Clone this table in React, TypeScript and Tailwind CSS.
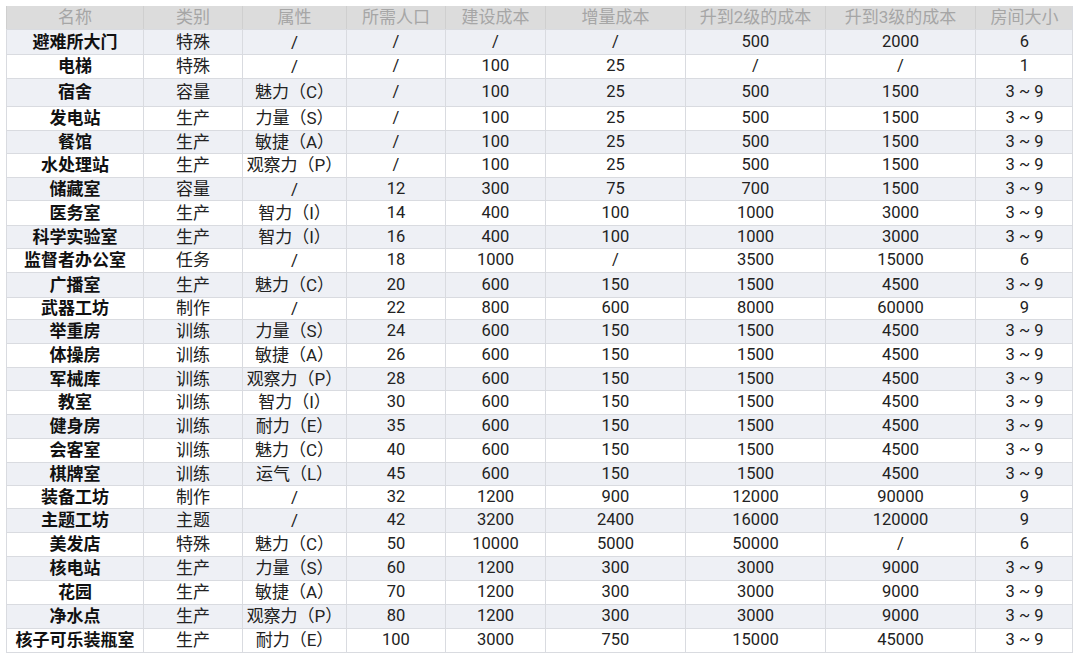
import React from "react";

const headers = [
  "名称",
  "类别",
  "属性",
  "所需人口",
  "建设成本",
  "增量成本",
  "升到2级的成本",
  "升到3级的成本",
  "房间大小",
];

// row heights measured from the source picture (宿舍 row is taller)
const rows: { h: string; c: string[] }[] = [
  { h: "h-[25px]", c: ["避难所大门", "特殊", "/", "/", "/", "/", "500", "2000", "6"] },
  { h: "h-[24px]", c: ["电梯", "特殊", "/", "/", "100", "25", "/", "/", "1"] },
  { h: "h-[28px]", c: ["宿舍", "容量", "魅力（C）", "/", "100", "25", "500", "1500", "3 ~ 9"] },
  { h: "h-[24px]", c: ["发电站", "生产", "力量（S）", "/", "100", "25", "500", "1500", "3 ~ 9"] },
  { h: "h-[23px]", c: ["餐馆", "生产", "敏捷（A）", "/", "100", "25", "500", "1500", "3 ~ 9"] },
  { h: "h-[24px]", c: ["水处理站", "生产", "观察力（P）", "/", "100", "25", "500", "1500", "3 ~ 9"] },
  { h: "h-[23px]", c: ["储藏室", "容量", "/", "12", "300", "75", "700", "1500", "3 ~ 9"] },
  { h: "h-[25px]", c: ["医务室", "生产", "智力（I）", "14", "400", "100", "1000", "3000", "3 ~ 9"] },
  { h: "h-[23px]", c: ["科学实验室", "生产", "智力（I）", "16", "400", "100", "1000", "3000", "3 ~ 9"] },
  { h: "h-[24px]", c: ["监督者办公室", "任务", "/", "18", "1000", "/", "3500", "15000", "6"] },
  { h: "h-[25px]", c: ["广播室", "生产", "魅力（C）", "20", "600", "150", "1500", "4500", "3 ~ 9"] },
  { h: "h-[22px]", c: ["武器工坊", "制作", "/", "22", "800", "600", "8000", "60000", "9"] },
  { h: "h-[24px]", c: ["举重房", "训练", "力量（S）", "24", "600", "150", "1500", "4500", "3 ~ 9"] },
  { h: "h-[24px]", c: ["体操房", "训练", "敏捷（A）", "26", "600", "150", "1500", "4500", "3 ~ 9"] },
  { h: "h-[23px]", c: ["军械库", "训练", "观察力（P）", "28", "600", "150", "1500", "4500", "3 ~ 9"] },
  { h: "h-[24px]", c: ["教室", "训练", "智力（I）", "30", "600", "150", "1500", "4500", "3 ~ 9"] },
  { h: "h-[24px]", c: ["健身房", "训练", "耐力（E）", "35", "600", "150", "1500", "4500", "3 ~ 9"] },
  { h: "h-[24px]", c: ["会客室", "训练", "魅力（C）", "40", "600", "150", "1500", "4500", "3 ~ 9"] },
  { h: "h-[23px]", c: ["棋牌室", "训练", "运气（L）", "45", "600", "150", "1500", "4500", "3 ~ 9"] },
  { h: "h-[23px]", c: ["装备工坊", "制作", "/", "32", "1200", "900", "12000", "90000", "9"] },
  { h: "h-[24px]", c: ["主题工坊", "主题", "/", "42", "3200", "2400", "16000", "120000", "9"] },
  { h: "h-[24px]", c: ["美发店", "特殊", "魅力（C）", "50", "10000", "5000", "50000", "/", "6"] },
  { h: "h-[24px]", c: ["核电站", "生产", "力量（S）", "60", "1200", "300", "3000", "9000", "3 ~ 9"] },
  { h: "h-[24px]", c: ["花园", "生产", "敏捷（A）", "70", "1200", "300", "3000", "9000", "3 ~ 9"] },
  { h: "h-[24px]", c: ["净水点", "生产", "观察力（P）", "80", "1200", "300", "3000", "9000", "3 ~ 9"] },
  { h: "h-[24px]", c: ["核子可乐装瓶室", "生产", "耐力（E）", "100", "3000", "750", "15000", "45000", "3 ~ 9"] },
];

const cols =
  "grid grid-cols-[137px_99px_104px_99px_100px_140px_140px_150px_98px]";

export default function App() {
  return (
    <div className="w-[1080px] h-[658px] bg-white pt-[6px] pl-[6px] font-['Roboto','Noto_Sans_CJK_SC',sans-serif] overflow-hidden">
      <div className="w-[1067px] border-r border-b border-[#d9dbe0]">
        <div className={`${cols} h-[23px] bg-[#dcdcdc]`}>
          {headers.map((h, i) => (
            <div
              key={i}
              className="flex items-center justify-center text-[17px] text-[#a6a6a6] border-l border-[#cfcfcf] leading-none"
            >
              {h}
            </div>
          ))}
        </div>
        {rows.map((r, ri) => (
          <div
            key={ri}
            className={`${cols} ${r.h} border-t border-[#d9dbe0] ${
              ri % 2 === 0 ? "bg-[#eef0f5]" : "bg-white"
            }`}
          >
            {r.c.map((c, ci) => (
              <div
                key={ci}
                className={`flex items-center justify-center leading-none border-l border-[#d9dbe0] ${
                  ci === 0
                    ? "text-[17px] font-bold text-[#111]"
                    : ci < 3
                    ? "text-[17px] text-[#222]"
                    : "text-[16.5px] text-[#222]"
                }`}
              >
                {c}
              </div>
            ))}
          </div>
        ))}
      </div>
    </div>
  );
}
